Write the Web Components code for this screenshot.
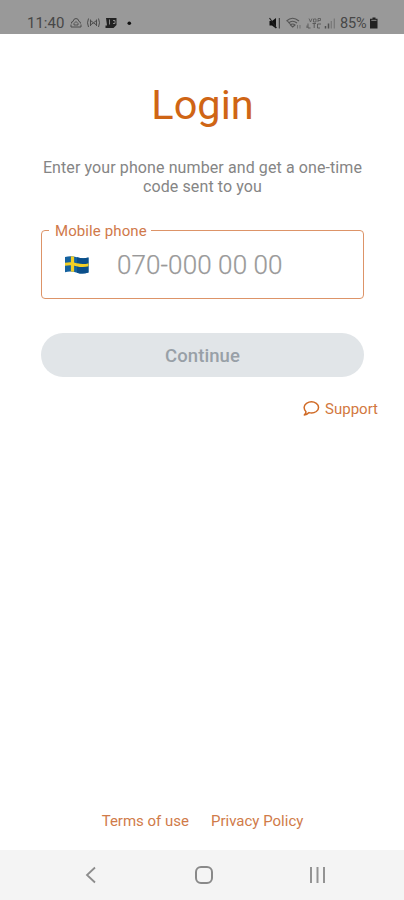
<!DOCTYPE html>
<html lang="en">
<head>
<meta charset="utf-8">
<title>Login</title>
<style>
    body {
        margin: 0;
        font-family: Roboto, "Liberation Sans", sans-serif;
        background: #fff;
    }
</style>
</head>
<body>
<login-screen></login-screen>

<script>
/**
 * Small helper: every element clones its own template
 * into an open shadow root.
 */
function defineElement(name, html) {
    const template = document.createElement('template');
    template.innerHTML = html;

    customElements.define(name, class extends HTMLElement {
        constructor() {
            super();
            const shadow = this.attachShadow({ mode: "open" });
            shadow.append(template.content.cloneNode(true));
        }
    });
}

// Clock and notification icons on the left, device state on the right
defineElement('status-bar', `
    <style>
        :host {
            display: flex;
            justify-content: space-between;
            box-sizing: border-box;
            height: 34px;
            padding: 13px 26px 0 27px;
            background: #999;
            color: #474747;
            font-size: 15px;
            line-height: 20px;
        }
        svg { display: block; }
        .side { display: flex; }
        .clock { width: 42px; }
        .battery { width: 29px; letter-spacing: -.2px; font-size: 14.5px; line-height: 21px; }
    </style>
    <div class="side">
        <span class="clock">11:40</span>
        <svg width="66" height="20" viewBox="69 13 66 20" fill="none" stroke="#4d4d4d">
            <path d="M71.5 23.5 Q71 21.5 73 21.5 Q73.5 18.5 76 18.5 Q78.5 18.5 79 21.5 Q81 22 80.5 23.5 M71 24.5 V27 H81 V24.5"/>
            <path d="M74 25 V23.5 L76 21.5 L78 23.5 V25 Z" stroke-width=".9"/>
            <path d="M88.5 18.5 Q86.5 22.8 88.5 27 M98.5 18.5 Q100.5 22.8 98.5 27"/>
            <path d="M90.5 19.5 V26 M96.5 19.5 V26 M90.5 20.5 L93.5 22.8 L90.5 25 M96.5 20.5 L93.5 22.8 L96.5 25"/>
            <path d="M106 18 H116.5 V25 L113.5 28 H105.5 V25.5 H107 Z" fill="#222" stroke="none"/>
            <path d="M109.5 19.5 V24.5 M113 20.5 H115 V23.5 H113" stroke="#888" stroke-width="1"/>
            <circle cx="129.3" cy="23.3" r="1.8" fill="#111" stroke="none"/>
        </svg>
    </div>
    <div class="side">
        <svg width="72" height="20" viewBox="268 13 72 20" fill="none" stroke="#555">
            <path d="M269.5 21 H272 L276 18 V28.5 L272 25.5 H269.5 Z" fill="#111" stroke="none"/>
            <path d="M269.5 18 L276.5 28" stroke="#222" stroke-width="1.2"/>
            <path d="M279.3 18 V28.5" stroke="#333"/>
            <path d="M286.5 21 Q292.5 15.5 299 21 M288.5 23 Q292.5 19.5 297 23 M290.5 25 Q292.5 23 295 25 L292.7 27 Z M287 20.5 L291 25" stroke-width="1.1"/>
            <path d="M297.5 28.5 V25 M300 25 V28.5" stroke="#666" stroke-width=".8"/>
            <path d="M309 18.5 L310.5 22 L312 18.5 M313.5 19 H316 V22 H313.5 Z M318 22 V18.5 H320.5 V20.5 H318" stroke-width=".8"/>
            <path d="M308 23.5 V28 H310.5 M312.5 23.5 H316 M314.2 23.5 V28 M321 24 H317.5 V28 H320 M307 25.5 V28" stroke-width=".9"/>
            <path d="M325.5 28.5 V26 M328.5 28.5 V23.5" stroke="#505050" stroke-width="1.5"/>
            <path d="M331.3 28.5 V21 M334.3 28.5 V18.5" stroke="#777" stroke-width="1.2"/>
        </svg>
        <span class="battery">85%</span>
        <svg width="9" height="20" viewBox="369 13 9 20">
            <path d="M372.5 17.5 H375.5 V18.7 H377.5 V28.5 H370 V18.7 H372.5 Z" fill="#222"/>
            <path d="M371.3 19.8 H376.5 V21 H371.3 Z" fill="#777"/>
        </svg>
    </div>
`);

defineElement('page-heading', `
    <style>
        :host {
            display: block;
            text-align: center;
        }
        h1 {
            margin: 0;
            color: #cf6515;
            font-size: 41.5px;
            font-weight: 400;
            line-height: 49px;
        }
        p {
            margin: 29px -5px 0;
            color: #858585;
            font-size: 16px;
            line-height: 19px;
            letter-spacing: .1px;
        }
    </style>
    <h1><slot name="title"></slot></h1>
    <p><slot></slot></p>
`);

defineElement('swedish-flag', `
    <style>
        :host { display: block; width: 26px; height: 20px; }
        svg { display: block; }
    </style>
    <svg width="26" height="20" viewBox="0 0 26 20">
        <clipPath id="wave">
            <path d="M1 2 Q7 .5 13 2.3 Q19 4 24.5 2.5 V17.5 Q19 19.5 13 17.7 Q7 15.8 1 17.2 Z"/>
        </clipPath>
        <g clip-path="url(#wave)">
            <rect width="26" height="20" fill="#15629f"/>
            <path d="M13 0 H26 V20 H13 Z" fill="#0b4f8a"/>
            <path d="M8.5 0 V20" stroke="#f3cf25" stroke-width="3.2"/>
            <path d="M0 9.5 Q7 7.8 13 9.8 Q19 11.5 26 9.5" fill="none" stroke="#f3cf25" stroke-width="3"/>
        </g>
    </svg>
`);

// Outlined field, the legend cuts through the top border
defineElement('phone-field', `
    <style>
        :host { display: block; }
        fieldset {
            box-sizing: border-box;
            height: 76px;
            min-width: 0;
            margin: 0;
            padding: 0 0 0 22px;
            border: 1.5px solid #dd9468;
            border-radius: 4px;
        }
        legend {
            margin-left: -15px;
            padding: 2px 4px 0 6px;
            color: #d0794a;
            font-size: 15px;
            line-height: 13px;
            letter-spacing: .1px;
        }
        .row {
            display: flex;
            align-items: center;
            gap: 27px;
            height: 54px;
        }
        .number {
            color: #999;
            font-size: 26px;
            font-weight: 300;
            line-height: 32px;
            letter-spacing: .1px;
            -webkit-text-stroke: .25px #999;
        }
    </style>
    <fieldset>
        <legend><slot name="label"></slot></legend>
        <div class="row">
            <swedish-flag></swedish-flag>
            <span class="number"><slot></slot></span>
        </div>
    </fieldset>
`);

defineElement('pill-button', `
    <style>
        :host { display: block; }
        button {
            display: block;
            width: 100%;
            height: 44px;
            padding: 2px 0 0;
            border: 0;
            border-radius: 22px;
            background: #e1e5e8;
            color: #98a0a7;
            font-family: inherit;
            font-size: 18.5px;
            font-weight: 500;
            letter-spacing: .1px;
        }
    </style>
    <button type="button"><slot></slot></button>
`);

defineElement('support-link', `
    <style>
        :host {
            display: flex;
            justify-content: flex-end;
            align-items: center;
            gap: 5px;
            color: #d27840;
            font-size: 15px;
            line-height: 20px;
        }
        svg { display: block; }
    </style>
    <svg width="17" height="16" viewBox="0 0 17 16" fill="none" stroke="#d06a25" stroke-width="1.5" stroke-linejoin="round">
        <path d="M3 10.7 C.3 8.1 .6 4.2 3.5 2.3 C6.5 .5 10.5 .5 13.3 2.3 C16.3 4.5 16.3 8.3 13.3 10.5 C11 12.1 8.5 12.4 6 11.6 C4.8 13 3 14 1.3 14 C2.5 12.8 3 11.8 3 10.7 Z"/>
    </svg>
    <span><slot></slot></span>
`);

defineElement('footer-links', `
    <style>
        :host {
            display: flex;
            justify-content: center;
            gap: 22px;
            color: #d07b49;
            font-size: 15px;
            line-height: 20px;
        }
    </style>
    <slot></slot>
`);

defineElement('nav-bar', `
    <style>
        :host {
            display: grid;
            grid-template-columns: repeat(3, 113px);
            justify-content: center;
            align-items: center;
            justify-items: center;
            height: 50px;
            padding-left: 4px;
            background: #f4f4f4;
        }
        svg { display: block; }
    </style>
    <svg width="20" height="20" viewBox="0 0 20 20" fill="none" stroke="#8c8c8c" stroke-width="1.8">
        <path d="M14 2.5 L6 10 L14 17.5"/>
    </svg>
    <svg width="20" height="20" viewBox="0 0 20 20" fill="none" stroke="#898989" stroke-width="2">
        <rect x="2" y="2" width="16" height="16" rx="5"/>
    </svg>
    <svg width="20" height="20" viewBox="0 0 20 20" stroke="#939393" stroke-width="2">
        <path d="M4 2 V18 M10.5 2 V18 M17 2 V18"/>
    </svg>
`);

defineElement('login-screen', `
    <style>
        :host {
            display: flex;
            flex-direction: column;
            height: 900px;
        }
        main {
            flex: 1;
            display: flex;
            flex-direction: column;
            padding: 46px 40px 0 41px;
        }
        phone-field { margin-top: 27px; }
        pill-button { margin-top: 34px; }
        support-link { margin: 22px -14px 0 0; }
        footer-links { margin: auto 0 19px; }
    </style>
    <status-bar></status-bar>
    <main>
        <page-heading>
            <span slot="title">Login</span>
            Enter your phone number and get a one-time<br>code sent to you
        </page-heading>
        <phone-field><span slot="label">Mobile phone</span>070-000 00 00</phone-field>
        <pill-button>Continue</pill-button>
        <support-link>Support</support-link>
        <footer-links><span>Terms of use</span><span>Privacy Policy</span></footer-links>
    </main>
    <nav-bar></nav-bar>
`);
</script>
</body>
</html>
